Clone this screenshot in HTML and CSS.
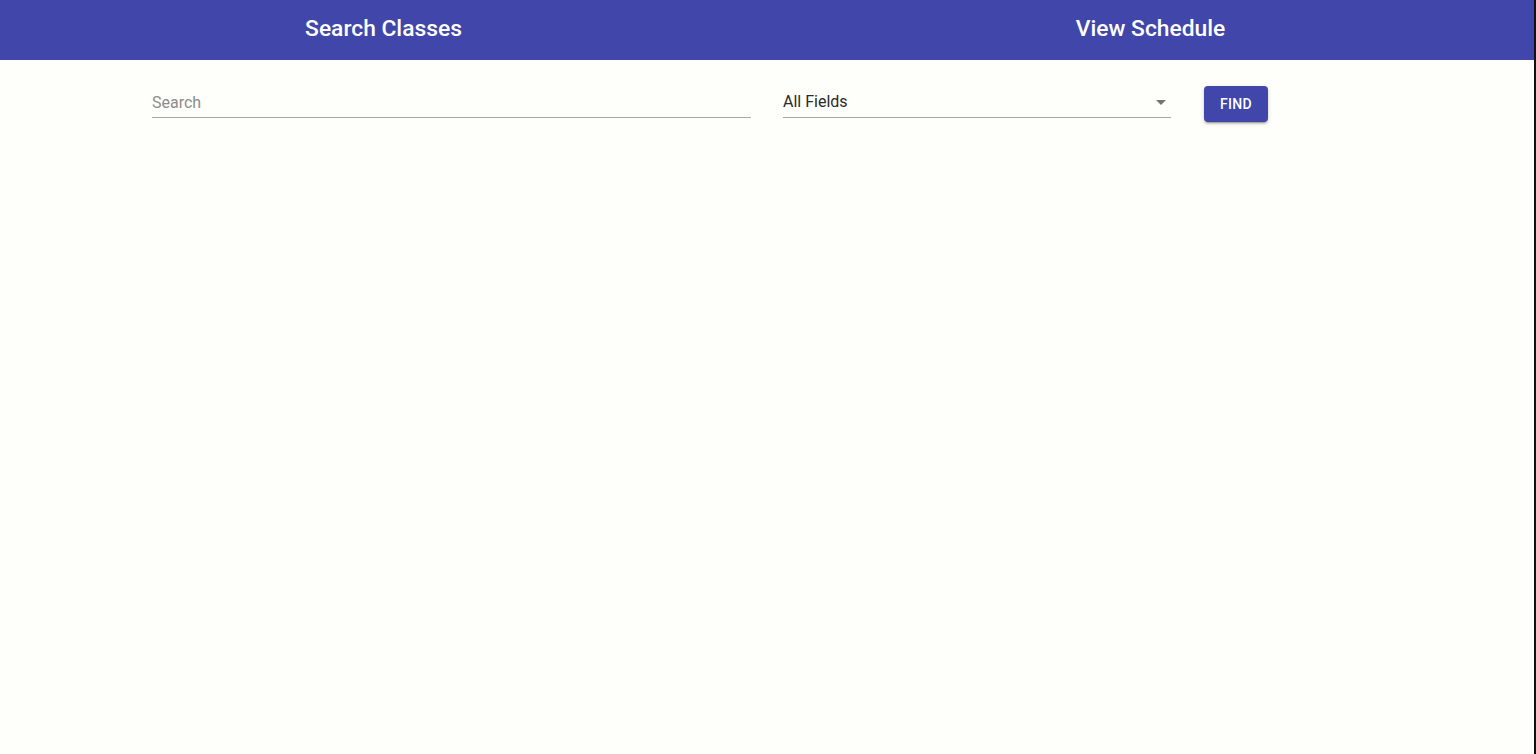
FILE: index.html
```html
<!DOCTYPE html>
<html lang="en">
<head>
<meta charset="utf-8">
<title>Search Classes</title>
<link rel="stylesheet" href="styles.css">
</head>
<body>
<div class="page">
  <header class="tabs">
    <div class="tab">Search Classes</div>
    <div class="tab">View Schedule</div>
  </header>
  <main class="search-row">
    <div class="field field-search">
      <input class="search-input" type="text" placeholder="Search">
    </div>
    <div class="field field-select">
      <span class="select-value">All Fields</span>
      <span class="select-arrow"></span>
    </div>
    <button class="find-btn" type="button">Find</button>
  </main>
</div>
</body>
</html>
```

FILE: styles.css
```css
html {
  background: #111;
  height: 100%;
}
body {
  margin: 0;
  height: 100%;
  font-family: Roboto, "Liberation Sans", Arial, sans-serif;
}
.page {
  margin-right: 2px;
  min-height: 100%;
  background: #fefefa;
}
.tabs {
  display: flex;
  height: 60px;
  background: #4046aa;
}
.tab {
  flex: 1;
  display: flex;
  align-items: center;
  justify-content: center;
  color: #ffffff;
  font-size: 22.8px;
  font-weight: 500;
  padding-bottom: 3px;
  box-sizing: border-box;
}
.search-row {
  display: flex;
  align-items: flex-start;
  padding: 26px 0 0 152px;
}
.field {
  height: 32px;
  box-sizing: border-box;
  border-bottom: 1px solid #a8a898;
  display: flex;
  align-items: center;
}
.field-search {
  width: 599px;
}
.search-input {
  width: 100%;
  border: 0;
  outline: none;
  background: transparent;
  padding: 2px 0 0 0;
  margin: 0;
  font-family: Roboto, "Liberation Sans", Arial, sans-serif;
  font-size: 16px;
  color: #333;
}
.search-input::placeholder {
  color: #8c8c8c;
  opacity: 1;
}
.field-select {
  width: 388px;
  margin-left: 32px;
  justify-content: space-between;
}
.select-value {
  font-size: 16px;
  color: #2a2a2a;
  padding-bottom: 1px;
}
.select-arrow {
  width: 0;
  height: 0;
  border-left: 5px solid transparent;
  border-right: 5px solid transparent;
  border-top: 5px solid #757570;
  margin-right: 5px;
  margin-top: 2px;
}
.find-btn {
  margin-left: 33px;
  width: 64px;
  height: 36px;
  border: 0;
  border-radius: 4px;
  background: #4046aa;
  color: #fff;
  font-family: Roboto, "Liberation Sans", Arial, sans-serif;
  font-size: 14px;
  font-weight: 500;
  text-transform: uppercase;
  letter-spacing: 0.3px;
  box-shadow: 0 3px 1px -2px rgba(0,0,0,.2), 0 2px 2px 0 rgba(0,0,0,.14), 0 1px 5px 0 rgba(0,0,0,.12);
  cursor: pointer;
  padding: 0;
}
```
